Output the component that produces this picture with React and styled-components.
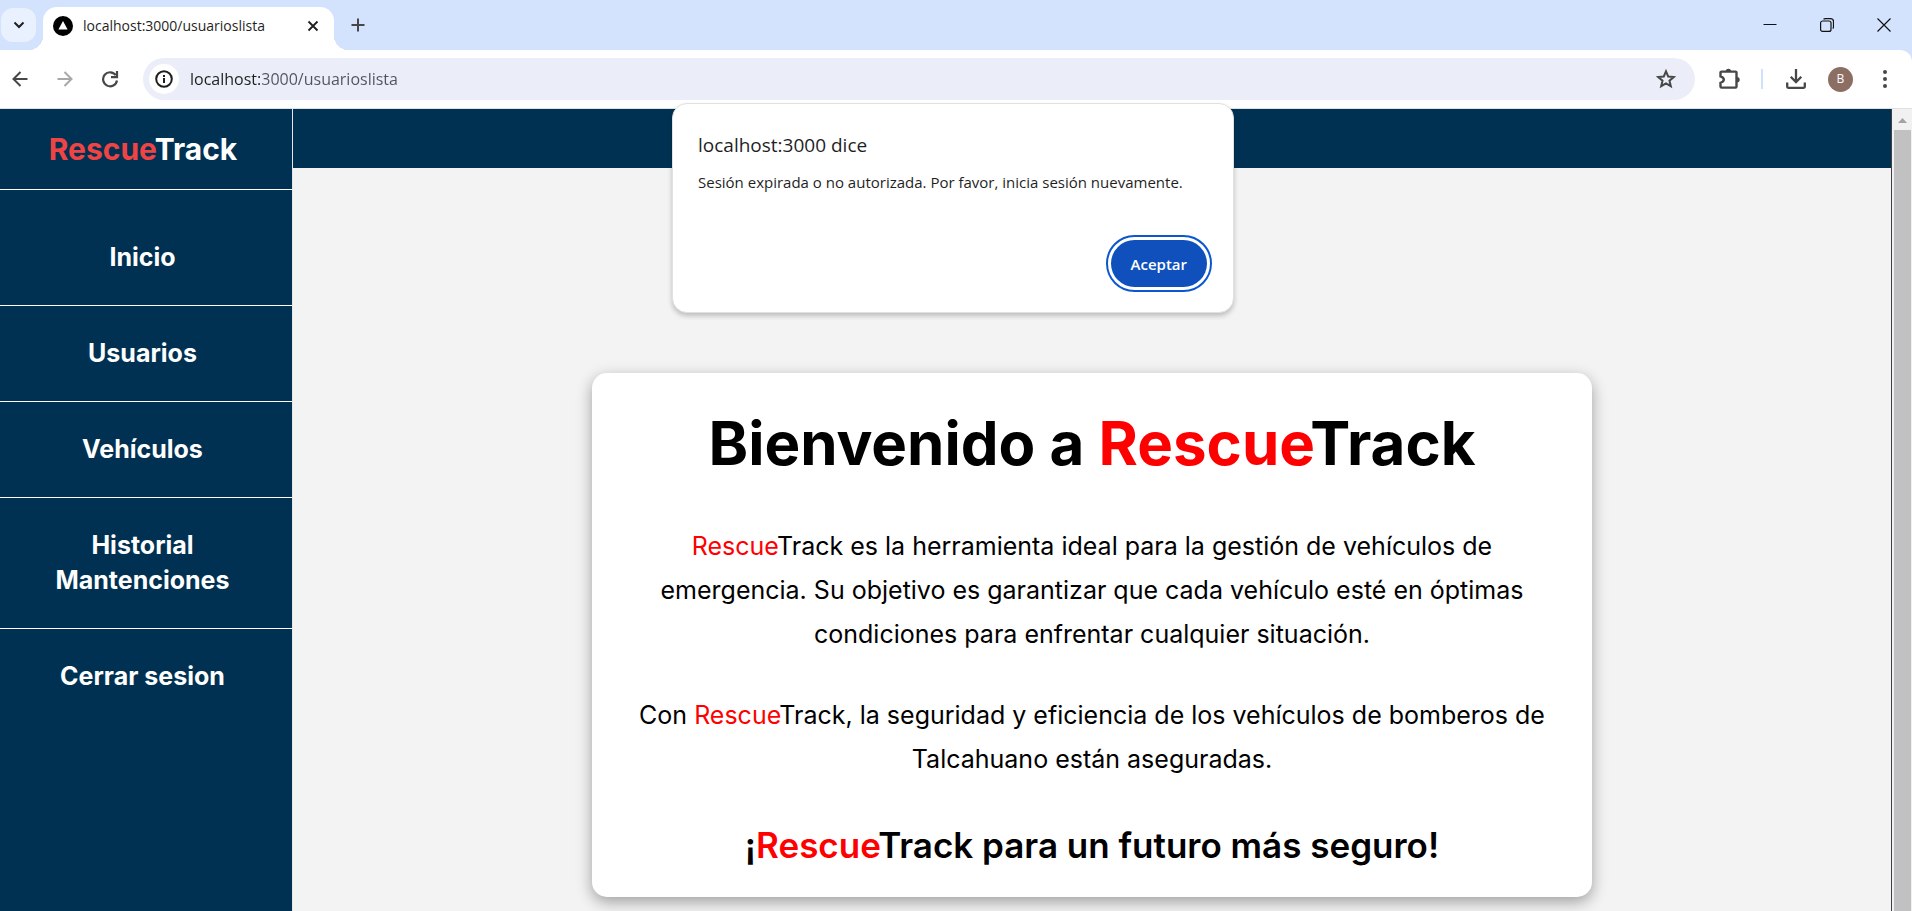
import React from "react";
import styled, { createGlobalStyle, css } from "styled-components";

const uiFont = `"Open Sans", "Noto Sans", sans-serif`;
const pageFont = `Inter, "Liberation Sans", sans-serif`;

const GlobalStyle = createGlobalStyle`
  *, *::before, *::after { box-sizing: border-box; }
  body { margin: 0; background: #f3f3f3; }
  h1, h2, p, ul { margin: 0; padding: 0; }
  button { border: 0; padding: 0; background: none; font: inherit; color: inherit; cursor: pointer; }
`;

const Window = styled.div`
  position: relative;
  display: flex;
  flex-direction: column;
  min-height: 100vh;
  font-family: ${uiFont};
`;

const TabStrip = styled.div`
  display: flex;
  align-items: flex-end;
  height: 50px;
  background: #d3e3fd;
  color: #1f1f1f;
`;

const Centered = css`
  display: flex;
  align-items: center;
  justify-content: center;
  flex: none;
`;

const TabSearch = styled.button`
  ${Centered}
  width: 35px;
  height: 34px;
  margin: 0 7px 8px 1px;
  border-radius: 12px;
  background: #e9f1fe;
`;

const Tab = styled.div`
  position: relative;
  display: flex;
  align-items: center;
  gap: 10px;
  width: 291px;
  height: 43px;
  padding: 0 12px 6px 10px;
  border-radius: 14px 14px 0 0;
  background: #fff;

  &::before,
  &::after {
    content: "";
    position: absolute;
    bottom: 0;
    width: 14px;
    height: 14px;
  }
  &::before {
    right: 100%;
    background: radial-gradient(circle at 0 0, transparent 14px, #fff 14px);
  }
  &::after {
    left: 100%;
    background: radial-gradient(circle at 100% 0, transparent 14px, #fff 14px);
  }
`;

const TabTitle = styled.span`
  flex: 1;
  font-size: 14px;
  line-height: 20px;
  white-space: nowrap;
`;

const IconButton = styled.button`
  ${Centered}
  width: ${(p) => p.$size || 32}px;
  height: ${(p) => p.$size || 32}px;
  color: ${(p) => p.$color || "#474747"};
`;

const NewTab = styled(IconButton)`
  margin: 0 0 9px 8px;
`;

const WindowControls = styled.div`
  display: flex;
  align-self: center;
  margin-left: auto;
`;

const ControlButton = styled.button`
  ${Centered}
  width: 57px;
  height: 48px;
  color: #111;
`;

const ToolbarFrame = styled.div`
  background: #d3e3fd;
`;

const Toolbar = styled.div`
  display: flex;
  align-items: center;
  height: 59px;
  padding: 0 11px 0 4px;
  border-bottom: 1px solid #dfe1e5;
  border-radius: 0 12px 0 0;
  background: #fff;
`;

const NavButtons = styled.div`
  display: flex;
  gap: 13px;
  margin-right: 17px;
`;

const AddressBar = styled.div`
  flex: 1;
  display: flex;
  align-items: center;
  height: 42px;
  padding: 0 13px 0 6px;
  border-radius: 21px;
  background: #ebeef8;
`;

const SiteInfo = styled.button`
  ${Centered}
  width: 30px;
  height: 30px;
  border-radius: 50%;
  background: #fff;
  color: #1f1f1f;
`;

const AddressInput = styled.input`
  flex: 1;
  min-width: 0;
  margin-left: 11px;
  padding: 0;
  border: 0;
  outline: 0;
  font: 16px/24px ${uiFont};
  color: transparent;
  background: linear-gradient(to right, #1f1f1f 70px, #50535a 70px);
  background-clip: text;
`;

const ToolbarActions = styled.div`
  display: flex;
  align-items: center;
  margin-left: 18px;
`;

const Divider = styled.span`
  width: 2px;
  height: 20px;
  margin: 0 17px 0 16px;
  background: #cfe1fb;
`;

const Avatar = styled.button`
  ${Centered}
  width: 25px;
  height: 25px;
  margin: 0 16px;
  border-radius: 50%;
  background: #8d6e63;
  color: #fff;
  font-size: 12px;
  line-height: 16px;
`;

const Viewport = styled.div`
  flex: 1;
  display: flex;
  font-family: ${pageFont};
`;

const Sidebar = styled.aside`
  flex: none;
  width: 293px;
  border-right: 1px solid #e5e7eb;
  background: #003152;
  color: #fff;
`;

const Brand = styled.div`
  display: flex;
  align-items: center;
  justify-content: center;
  height: 81px;
  padding-right: 6px;
  border-bottom: 1px solid #fff;
  font-size: 30px;
  line-height: 36px;
  font-weight: 700;
`;

const Accent = styled.span`
  color: ${(p) => p.$color || "#ff0000"};
`;

const Menu = styled.ul`
  padding-top: 20px;
  list-style: none;
`;

const MenuItem = styled.li`
  border-bottom: 1px solid #fff;
  &:last-child { border-bottom: 0; }
`;

const MenuLink = styled.a`
  display: block;
  padding: 30px 46px 30px 39px;
  color: inherit;
  font-size: 25px;
  line-height: 35px;
  font-weight: 700;
  text-align: center;
  text-decoration: none;
`;

const Content = styled.div`
  flex: 1;
  display: flex;
  flex-direction: column;
  min-width: 0;
  border-right: 1px solid #3f3f46;
  background: #f3f3f3;
`;

const TopBar = styled.header`
  height: 59px;
  background: #003152;
`;

const Main = styled.main`
  flex: 1;
  display: flex;
  justify-content: center;
  align-items: flex-start;
  padding: 205px 32px 14px;
`;

const Card = styled.section`
  width: 100%;
  max-width: 1000px;
  padding: 40px 40px 25px;
  border-radius: 15px;
  background: #fff;
  box-shadow: 0 5px 15px rgba(0, 0, 0, 0.35);
  color: #000;
  text-align: center;
`;

const Title = styled.h1`
  margin-bottom: 51px;
  font-size: 60px;
  line-height: 60px;
  font-weight: 700;
`;

const Paragraph = styled.p`
  margin-bottom: 37px;
  font-size: 25px;
  line-height: 44px;
`;

const Closing = styled.h2`
  font-size: 35px;
  line-height: 54px;
  font-weight: 600;
`;

const ScrollTrack = styled.div`
  flex: none;
  display: flex;
  flex-direction: column;
  align-items: center;
  width: 20px;
  background: #f1f1f1;
`;

const ScrollThumb = styled.div`
  flex: 1;
  width: 17px;
  background: #c1c1c1;
`;

const Dialog = styled.div`
  position: absolute;
  top: 103px;
  left: calc(50% - 284px);
  width: 562px;
  padding: 27px 26px 25px 25px;
  border: 1px solid #dfe1e3;
  border-radius: 15px;
  background: #fff;
  box-shadow: 0 3px 5px rgba(0, 0, 0, 0.22);
  color: #1f1f1f;
`;

const DialogTitle = styled.h2`
  margin-bottom: 11px;
  font-size: 19px;
  line-height: 28px;
  font-weight: 500;
`;

const DialogText = styled.p`
  margin-bottom: 46px;
  font-size: 15px;
  line-height: 24px;
`;

const DialogActions = styled.div`
  display: flex;
  justify-content: flex-end;
`;

const AcceptButton = styled.button`
  height: 47px;
  padding: 0 20px;
  border-radius: 24px;
  outline: 2px solid #0b57d0;
  outline-offset: 3px;
  background: #0f50bd;
  color: #fff;
  font-size: 15px;
  font-weight: 600;
`;

const Icon = ({ size = 20, width = 2, children, fill = "none", ...rest }) => (
  <svg
    width={size}
    height={size}
    viewBox={`0 0 ${size} ${size}`}
    fill={fill}
    stroke="currentColor"
    strokeWidth={width}
    aria-hidden="true"
    {...rest}
  >
    {children}
  </svg>
);

const BrandName = ({ color }) => (
  <>
    <Accent $color={color}>Rescue</Accent>Track
  </>
);

const menu = ["Inicio", "Usuarios", "Vehículos", "Historial Mantenciones", "Cerrar sesion"];

export default function App() {
  return (
    <Window>
      <GlobalStyle />
      <TabStrip>
        <TabSearch aria-label="Buscar pestañas">
          <Icon size={12}><path d="M1.5 3.5 6 8l4.500-4.500" /></Icon>
        </TabSearch>
        <Tab>
          <Icon size={20} stroke="none">
            <circle cx="10" cy="10" r="10" fill="#000" />
            <path d="M10 5 14.600 13.500H5.400Z" fill="#fff" />
          </Icon>
          <TabTitle>localhost:3000/usuarioslista</TabTitle>
          <IconButton $size={18} $color="#1f1f1f" aria-label="Cerrar pestaña">
            <Icon size={12} width={1.8}><path d="M1.500 1.500l9 9M10.500 1.500l-9 9" /></Icon>
          </IconButton>
        </Tab>
        <NewTab aria-label="Nueva pestaña">
          <Icon size={14}><path d="M7 .5v13M.5 7h13" /></Icon>
        </NewTab>
        <WindowControls>
          <ControlButton aria-label="Minimizar">
            <Icon size={14} width={1}><path d="M.5 6.500h13" /></Icon>
          </ControlButton>
          <ControlButton aria-label="Restaurar">
            <Icon size={14} width={1.2}>
              <rect x=".6" y="3" width="10.400" height="10.400" rx="2" />
              <path d="M3.500 1.200Q4.200.6 5.500.6h5q3 0 3 3v5q0 1.300-.700 2" />
            </Icon>
          </ControlButton>
          <ControlButton aria-label="Cerrar">
            <Icon size={14} width={1.2}><path d="M.5.5l13 13M13.500.5l-13 13" /></Icon>
          </ControlButton>
        </WindowControls>
      </TabStrip>

      <ToolbarFrame>
        <Toolbar>
          <NavButtons>
            <IconButton aria-label="Atrás">
              <Icon size={16}><path d="M15.500 8H2M8.500 1 1.500 8l7 7" /></Icon>
            </IconButton>
            <IconButton $color="#a8a8a8" aria-label="Adelante">
              <Icon size={16}><path d="M.5 8H14M7.500 1l7 7-7 7" /></Icon>
            </IconButton>
            <IconButton aria-label="Recargar">
              <Icon size={18} width={2.200}>
                <path d="M14.800 5.200A7 7 0 1 0 16 10.500" />
                <path d="M16 1v6.200H10" />
              </Icon>
            </IconButton>
          </NavButtons>
          <AddressBar>
            <SiteInfo aria-label="Información del sitio">
              <Icon size={18}>
                <circle cx="9" cy="9" r="7.800" />
                <path d="M9 8v5M9 5v2" />
              </Icon>
            </SiteInfo>
            <AddressInput aria-label="Dirección" defaultValue="localhost:3000/usuarioslista" />
            <IconButton aria-label="Añadir a favoritos">
              <Icon size={20} width={2}>
                <path d="M10 2.300l2.200 5.200 5.600.5-4.300 3.700 1.300 5.500L10 14.300l-4.800 2.900 1.300-5.500L2.200 8l5.600-.5z" />
              </Icon>
            </IconButton>
          </AddressBar>
          <ToolbarActions>
            <IconButton aria-label="Extensiones">
              <Icon size={22} width={2.400}>
                <path d="M2.500 4.600q0-1 1-1h14q1 0 1 1v14q0 1-1 1h-14q-1 0-1-1v-3.800q3.300-1 3.300-3.200t-3.300-3.200z" />
                <path d="M7.700 3.500a2.700 2.700 0 0 1 5.400 0zM19 9a2.700 2.700 0 0 1 0 5.400z" fill="currentColor" stroke="none" />
              </Icon>
            </IconButton>
            <Divider />
            <IconButton aria-label="Descargas">
              <Icon size={20} width={2.300}>
                <path d="M10 0v13M4.700 7.800l5.300 5.300 5.300-5.300M1.200 13.500V17.800q0 1 1 1h15.600q1 0 1-1v-4.300" />
              </Icon>
            </IconButton>
            <Avatar aria-label="Perfil">B</Avatar>
            <IconButton aria-label="Menú">
              <Icon size={20} fill="currentColor" stroke="none">
                <circle cx="10" cy="3" r="2" />
                <circle cx="10" cy="10" r="2" />
                <circle cx="10" cy="17" r="2" />
              </Icon>
            </IconButton>
          </ToolbarActions>
        </Toolbar>
      </ToolbarFrame>

      <Viewport>
        <Sidebar>
          <Brand><span><BrandName color="#ef4444" /></span></Brand>
          <nav>
            <Menu>
              {menu.map((label) => (
                <MenuItem key={label}>
                  <MenuLink href="#">{label}</MenuLink>
                </MenuItem>
              ))}
            </Menu>
          </nav>
        </Sidebar>
        <Content>
          <TopBar />
          <Main>
            <Card>
              <Title>Bienvenido a <BrandName /></Title>
              <Paragraph>
                <BrandName /> es la herramienta ideal para la gestión de vehículos de emergencia. Su
                objetivo es garantizar que cada vehículo esté en óptimas condiciones para enfrentar
                cualquier situación.
              </Paragraph>
              <Paragraph>
                Con <BrandName />, la seguridad y eficiencia de los vehículos de bomberos de
                Talcahuano están aseguradas.
              </Paragraph>
              <Closing>¡<BrandName /> para un futuro más seguro!</Closing>
            </Card>
          </Main>
        </Content>
        <ScrollTrack>
          <Icon size={21} stroke="none">
            <path d="M10.500 9 15 14H6z" fill="#a3a3a3" />
          </Icon>
          <ScrollThumb />
        </ScrollTrack>
      </Viewport>

      <Dialog role="alertdialog" aria-labelledby="dialog-title" aria-describedby="dialog-text">
        <DialogTitle id="dialog-title">localhost:3000 dice</DialogTitle>
        <DialogText id="dialog-text">
          Sesión expirada o no autorizada. Por favor, inicia sesión nuevamente.
        </DialogText>
        <DialogActions>
          <AcceptButton>Aceptar</AcceptButton>
        </DialogActions>
      </Dialog>
    </Window>
  );
}
